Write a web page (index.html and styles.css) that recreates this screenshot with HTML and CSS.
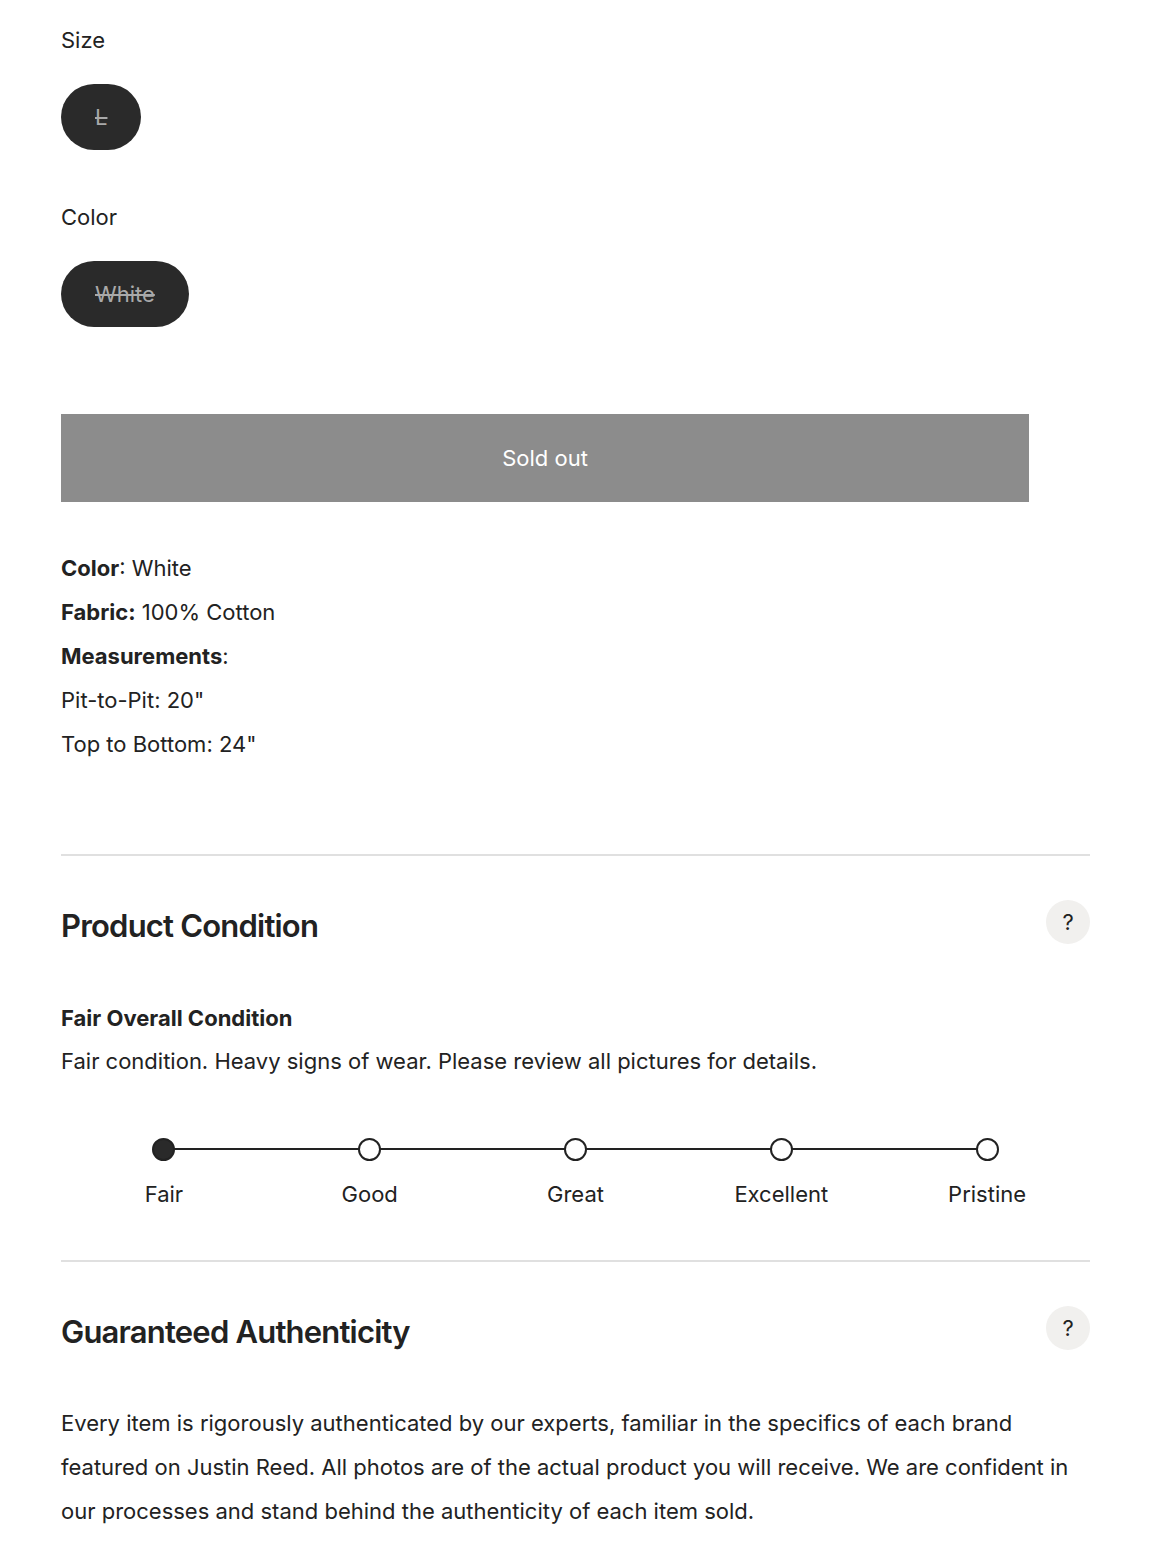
FILE: index.html
```html
<!DOCTYPE html>
<html lang="en">
<head>
<meta charset="utf-8">
<title>Product</title>
<link rel="stylesheet" href="styles.css">
</head>
<body>
<main class="product">
  <section class="option">
    <div class="option-label">Size</div>
    <div class="pills">
      <span class="pill pill-disabled">L</span>
    </div>
  </section>
  <section class="option">
    <div class="option-label">Color</div>
    <div class="pills">
      <span class="pill pill-disabled">White</span>
    </div>
  </section>

  <button class="buy-button" disabled>Sold out</button>

  <div class="details">
    <p><strong>Color</strong>: White</p>
    <p><strong>Fabric:</strong> 100% Cotton</p>
    <p><strong>Measurements</strong>:</p>
    <p>Pit-to-Pit: 20"</p>
    <p>Top to Bottom: 24"</p>
  </div>

  <section class="panel">
    <div class="panel-head">
      <h2 class="panel-title">Product Condition</h2>
      <button class="help">?</button>
    </div>
    <h3 class="condition-title">Fair Overall Condition</h3>
    <p class="condition-text">Fair condition. Heavy signs of wear. Please review all pictures for details.</p>
    <div class="scale">
      <div class="scale-line"></div>
      <div class="step step-active"><span class="dot"></span><span class="step-label">Fair</span></div>
      <div class="step"><span class="dot"></span><span class="step-label">Good</span></div>
      <div class="step"><span class="dot"></span><span class="step-label">Great</span></div>
      <div class="step"><span class="dot"></span><span class="step-label">Excellent</span></div>
      <div class="step"><span class="dot"></span><span class="step-label">Pristine</span></div>
    </div>
  </section>

  <section class="panel">
    <div class="panel-head">
      <h2 class="panel-title">Guaranteed Authenticity</h2>
      <button class="help">?</button>
    </div>
    <p class="auth-text">Every item is rigorously authenticated by our experts, familiar in the specifics of each brand featured on Justin Reed. All photos are of the actual product you will receive. We are confident in our processes and stand behind the authenticity of each item sold.</p>
  </section>
</main>
</body>
</html>
```

FILE: styles.css
```css
* { box-sizing: border-box; }

body {
  margin: 0;
  background: #fff;
  color: #222;
  font-family: Inter, "Liberation Sans", sans-serif;
  font-size: 22px;
  line-height: 44px;
}

.product {
  width: 1029px;
  margin-left: 61px;
  padding-top: 18px;
}

.option-label {
  line-height: 44px;
}

.pills {
  display: flex;
  gap: 10px;
  padding: 22px 0 44px;
}

.option:first-child .pills {
  padding-bottom: 45px;
}

.pill {
  display: inline-flex;
  align-items: center;
  justify-content: center;
  height: 66px;
  min-width: 79px;
  padding: 0 34px;
  border-radius: 33px;
  background: #2a2a2a;
  color: #fff;
}

.pill-disabled {
  color: #a9a9a9;
  text-decoration: line-through;
}

.buy-button {
  display: block;
  width: 968px;
  height: 88px;
  margin-top: 43px;
  border: 0;
  background: #8c8c8c;
  color: #fff;
  font: inherit;
}

.details {
  padding-top: 44px;
  padding-bottom: 88px;
}

.details p { margin: 0; }
.details strong { font-weight: 700; }

.panel {
  border-top: 2px solid #e0e0e0;
}

.panel-head {
  display: flex;
  justify-content: space-between;
  align-items: flex-start;
  padding-top: 44px;
}

.panel-title {
  margin: 2px 0 0;
  font-size: 31px;
  font-weight: 600;
  letter-spacing: -0.8px;
  line-height: 48px;
}

.help {
  width: 44px;
  height: 44px;
  border-radius: 50%;
  border: 0;
  background: #f1f0ee;
  color: #222;
  font: inherit;
  font-size: 22px;
  line-height: 44px;
  padding: 0;
}

.condition-title {
  margin: 46px 0 0;
  font-size: 22px;
  font-weight: 700;
  line-height: 44px;
}

.condition-text {
  margin: -1px 0 0;
}

.scale {
  position: relative;
  display: grid;
  grid-template-columns: repeat(5, 1fr);
  padding: 55px 0 44px;
}

.scale-line {
  position: absolute;
  top: 65px;
  left: 10%;
  right: 10%;
  height: 2px;
  background: #222;
}

.step {
  display: flex;
  flex-direction: column;
  align-items: center;
}

.dot {
  position: relative;
  width: 23px;
  height: 23px;
  border-radius: 50%;
  border: 2px solid #222;
  background: #fff;
}

.step-active .dot { background: #2a2a2a; }

.step-label {
  margin-top: 11px;
}

.auth-text {
  margin: 45px 0 0;
}
```
